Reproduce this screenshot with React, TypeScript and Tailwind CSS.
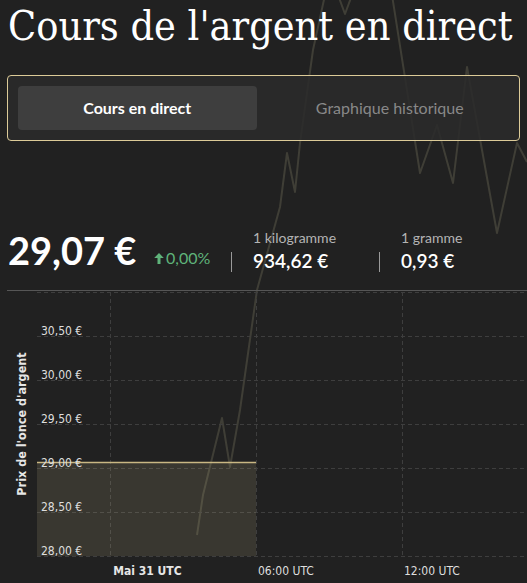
import React from "react";

const ui = { fontFamily: "Lato, 'Open Sans', sans-serif" };

function Background() {
  return (
    <svg
      className="absolute inset-0 pointer-events-none"
      width={527}
      height={583}
      viewBox="0 0 527 583"
      fill="none"
    >
      <path
        d="M197,535 L203,495 L222,418 L230,467 L240,410 L257,290 L280,207 L287,153 L295,192 L300,143 L313,50 L325,-5 L338,-5 L345,14 L352,-5 L392,-5 L420,173 L437,125 L453,183 L467,67 L497,233 L517,143 L527,162"
        stroke="#5d5b4b"
        strokeWidth={2}
        strokeLinejoin="round"
        opacity={0.5}
      />
    </svg>
  );
}

function Chart() {
  const grid = [2, 46, 90, 134, 178, 222, 266];
  const labels = ["30,50 €", "30,00 €", "29,50 €", "29,00 €", "28,50 €", "28,00 €"];
  const f = "'DejaVu Sans', Verdana, sans-serif";
  return (
    <svg width={527} height={293} viewBox="0 0 527 293" className="block">
      <line x1={7} y1={0.5} x2={527} y2={0.5} stroke="#565656" strokeWidth={1} />
      {grid.map((y) => (
        <line
          key={y}
          x1={37}
          y1={y + 0.5}
          x2={527}
          y2={y + 0.5}
          stroke="#3e3e3e"
          strokeWidth={1}
          strokeDasharray="4 3"
        />
      ))}
      {[110, 256, 402].map((x) => (
        <line
          key={x}
          x1={x + 0.5}
          y1={2}
          x2={x + 0.5}
          y2={266}
          stroke="#3e3e3e"
          strokeWidth={1}
          strokeDasharray="4 3"
        />
      ))}
      <rect x={37} y={172} width={219} height={94} fill="rgba(200,185,140,0.145)" />
      <line x1={37} y1={172.5} x2={256} y2={172.5} stroke="#c9b783" strokeWidth={1.5} />
      {labels.map((l, i) => (
        <text key={l} x={41} y={45 + i * 44} fill="#dedede" fontSize={12} fontFamily={f} fontStretch="condensed">
          {l}
        </text>
      ))}
      <text x={147.5} y={285} fill="#e6e6e6" fontSize={12} fontWeight={700} fontFamily={f} fontStretch="condensed" textAnchor="middle">
        Mai 31 UTC
      </text>
      <text x={258} y={285} fill="#dedede" fontSize={12} fontFamily={f} fontStretch="condensed">
        06:00 UTC
      </text>
      <text x={404} y={285} fill="#dedede" fontSize={12} fontFamily={f} fontStretch="condensed">
        12:00 UTC
      </text>
      <text
        x={0}
        y={0}
        transform="translate(21,134) rotate(-90)"
        fill="#e6e6e6"
        fontSize={12.5}
        fontWeight={700}
        fontFamily={f}
        fontStretch="condensed"
        textAnchor="middle"
        dominantBaseline="central"
      >
        Prix de l'once d'argent
      </text>
    </svg>
  );
}

export default function App() {
  return (
    <div className="relative w-[527px] h-[583px] overflow-hidden bg-[#212121]">
      <Background />
      <div className="relative flex flex-col">
        <h1
          className="pl-[8px] text-[41px] leading-[52px] text-white whitespace-nowrap font-stretch-condensed"
          style={{ fontFamily: "'DejaVu Serif', 'Liberation Serif', serif" }}
        >
          Cours de l'argent en direct
        </h1>
        <div
          className="mx-[7px] mt-[23px] h-[66px] rounded-[4px] border border-[#dccb98] bg-[rgba(42,42,42,0.85)] p-[10px] grid grid-cols-2 gap-[14px]"
          style={ui}
        >
          <div className="rounded-[4px] bg-[#3e3e3e] flex items-center justify-center text-[16px] font-bold text-white">
            Cours en direct
          </div>
          <div className="flex items-center justify-center text-[16px] text-[#888888]">
            Graphique historique
          </div>
        </div>
        <div className="mt-[84px] h-[50px] flex items-start pl-[8px]" style={ui}>
          <div className="w-[145px] text-[38px] leading-[50px] font-bold text-white whitespace-nowrap">
            29,07 €
          </div>
          <div className="w-[78px] mt-[23px] text-[16px] leading-[20px] text-[#5fb37a] flex items-center whitespace-nowrap">
            <svg width="12" height="13" viewBox="0 0 12 13" className="mr-[1px]">
              <path d="M6 1 L1.2 6 H4.5 V12 H7.5 V6 H10.8 Z" fill="#5fb37a" />
            </svg>
            0,00%
          </div>
          <div className="w-px h-[20px] mt-[27px] bg-[#9a9a9a]" />
          <div className="w-[126px] ml-[21px] mt-[4px] flex flex-col">
            <div className="text-[14px] leading-[18px] text-[#b4b4b4] whitespace-nowrap">1 kilogramme</div>
            <div className="mt-[2px] text-[19px] leading-[24px] font-semibold text-white whitespace-nowrap">
              934,62 €
            </div>
          </div>
          <div className="w-px h-[20px] mt-[27px] bg-[#9a9a9a]" />
          <div className="ml-[21px] mt-[4px] flex flex-col">
            <div className="text-[14px] leading-[18px] text-[#b4b4b4] whitespace-nowrap">1 gramme</div>
            <div className="mt-[2px] text-[19px] leading-[24px] font-semibold text-white whitespace-nowrap">
              0,93 €
            </div>
          </div>
        </div>
        <div className="mt-[15px]">
          <Chart />
        </div>
      </div>
    </div>
  );
}
